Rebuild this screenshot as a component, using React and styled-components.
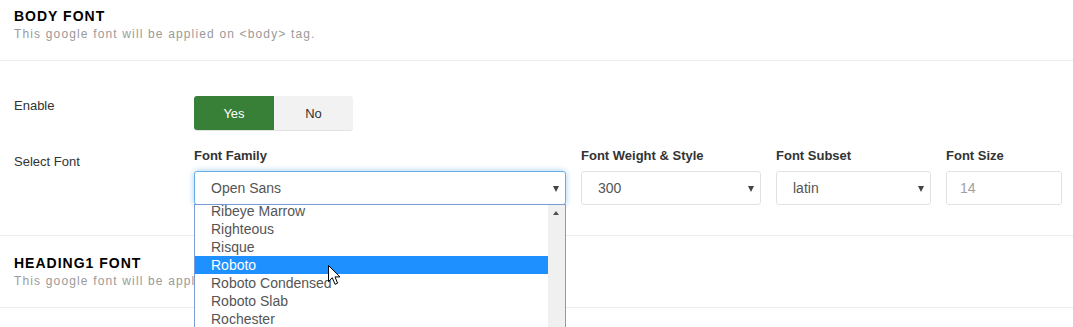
import styled, { createGlobalStyle } from "styled-components";

const GlobalStyle = createGlobalStyle`
  html, body {
    margin: 0;
    padding: 0;
    overflow: hidden;
    background: #fff;
    font-family: "Liberation Sans", Arial, sans-serif;
  }
`;

const fontList = [
  "Ribeye Marrow",
  "Righteous",
  "Risque",
  "Roboto",
  "Roboto Condensed",
  "Roboto Slab",
  "Rochester",
];

const fields = [
  { label: "Font Family", value: "Open Sans", focus: true, list: true },
  { label: "Font Weight & Style", value: "300" },
  { label: "Font Subset", value: "latin" },
  { label: "Font Size", value: "14", input: true },
];

const Cursor = () => (
  <CursorWrap width="13" height="21" viewBox="0 0 13 21">
    <path
      d="M0.5 0.5 L0.5 16.5 L4.3 12.8 L7 19.3 L9.6 18.2 L7 11.9 L12 11.9 Z"
      fill="#fff"
      stroke="#000"
      strokeWidth="1"
      strokeLinejoin="miter"
    />
  </CursorWrap>
);

const App = () => {
  return (
    <Page>
      <GlobalStyle />
      <SectionHead $top={8}>
        <Title>BODY FONT</Title>
        <Desc>This google font will be applied on &lt;body&gt; tag.</Desc>
      </SectionHead>
      <Body>
        <Row>
          <RowLabel $offset={1}>Enable</RowLabel>
          <Toggle>
            <ToggleBtn $active>Yes</ToggleBtn>
            <ToggleBtn>No</ToggleBtn>
          </Toggle>
        </Row>
        <Row>
          <RowLabel $offset={6}>Select Font</RowLabel>
          <Fields>
            {fields.map((f) => (
              <Field key={f.label}>
                <FieldLabel>{f.label}</FieldLabel>
                {f.input ? (
                  <TextBox>{f.value}</TextBox>
                ) : (
                  <SelectBox $focus={f.focus}>
                    {f.value}
                    {f.list && (
                      <ListBox>
                        <Options>
                          {fontList.map((name) => (
                            <Option key={name} $selected={name === "Roboto"}>
                              {name}
                            </Option>
                          ))}
                        </Options>
                        <ScrollTrack />
                        <Cursor />
                      </ListBox>
                    )}
                  </SelectBox>
                )}
              </Field>
            ))}
          </Fields>
        </Row>
      </Body>
      <SectionHead $top={19}>
        <Title>HEADING1 FONT</Title>
        <Desc>This google font will be applied on &lt;h1&gt; tag.</Desc>
      </SectionHead>
    </Page>
  );
};

const Page = styled.div`
  width: 100%;
  min-height: 327px;
`;

const SectionHead = styled.div`
  padding: ${(p) => p.$top}px 14px 18px;
  border-bottom: 1px solid #ececec;
`;

const Title = styled.h3`
  margin: 0;
  font-size: 14px;
  line-height: 16px;
  font-weight: bold;
  letter-spacing: 1px;
  color: #000;
`;

const Desc = styled.p`
  margin: 2px 0 0;
  font-size: 12px;
  line-height: 16px;
  letter-spacing: 1.15px;
  color: #9a9a9a;
`;

const Body = styled.div`
  display: flex;
  flex-direction: column;
  gap: 17px;
  padding: 35px 0 30px 14px;
  border-bottom: 1px solid #ececec;
`;

const Row = styled.div`
  display: flex;
  align-items: flex-start;
`;

const RowLabel = styled.div`
  width: 180px;
  flex-shrink: 0;
  padding-top: ${(p) => p.$offset}px;
  font-size: 13px;
  line-height: 18px;
  color: #333;
`;

const Toggle = styled.div`
  display: flex;
  border-radius: 3px;
  overflow: hidden;
  box-shadow: 0 1px 0 #e2e2e2;
`;

const ToggleBtn = styled.div`
  width: ${(p) => (p.$active ? 80 : 79)}px;
  height: 34px;
  display: flex;
  align-items: center;
  justify-content: center;
  font-size: 13px;
  color: ${(p) => (p.$active ? "#fff" : "#333")};
  background: ${(p) => (p.$active ? "#387f37" : "#f2f2f2")};
`;

const Fields = styled.div`
  display: grid;
  grid-template-columns: 372px 180px 155px 116px;
  column-gap: 15px;
`;

const Field = styled.div`
  display: flex;
  flex-direction: column;
`;

const FieldLabel = styled.label`
  font-size: 13px;
  line-height: 18px;
  font-weight: bold;
  color: #333;
  margin-bottom: 6px;
`;

const SelectBox = styled.div`
  position: relative;
  box-sizing: border-box;
  height: 34px;
  display: flex;
  align-items: center;
  padding-left: 16px;
  font-size: 14px;
  color: #555;
  border: 1px solid ${(p) => (p.$focus ? "#66afe9" : "#e2e2e2")};
  border-radius: 3px;
  box-shadow: ${(p) => (p.$focus ? "0 0 6px rgba(102, 175, 233, 0.6)" : "none")};

  &::after {
    content: "";
    position: absolute;
    right: 6px;
    top: 14px;
    border-left: 3.5px solid transparent;
    border-right: 3.5px solid transparent;
    border-top: 6px solid #444;
  }
`;

const TextBox = styled.div`
  box-sizing: border-box;
  height: 34px;
  display: flex;
  align-items: center;
  padding-left: 13px;
  font-size: 14px;
  color: #a0a0a0;
  border: 1px solid #e2e2e2;
  border-radius: 3px;
`;

const ListBox = styled.div`
  position: absolute;
  top: 100%;
  left: -1px;
  width: 372px;
  height: 140px;
  box-sizing: border-box;
  display: flex;
  background: #fff;
  border: 1px solid #7b9bd5;
  overflow: hidden;
  z-index: 10;
`;

const Options = styled.div`
  flex: 1;
  margin-top: -3px;
`;

const Option = styled.div`
  height: 18px;
  line-height: 18px;
  padding-left: 16px;
  font-size: 14px;
  color: ${(p) => (p.$selected ? "#fff" : "#555")};
  background: ${(p) => (p.$selected ? "#1e90ff" : "transparent")};
`;

const ScrollTrack = styled.div`
  position: relative;
  width: 17px;
  background: #f0f0f0;

  &::before {
    content: "";
    position: absolute;
    left: 5px;
    top: 6px;
    border-left: 3.5px solid transparent;
    border-right: 3.5px solid transparent;
    border-bottom: 4px solid #505050;
  }
`;

const CursorWrap = styled.svg`
  position: absolute;
  left: 133px;
  top: 60px;
  pointer-events: none;
`;

export default App;
